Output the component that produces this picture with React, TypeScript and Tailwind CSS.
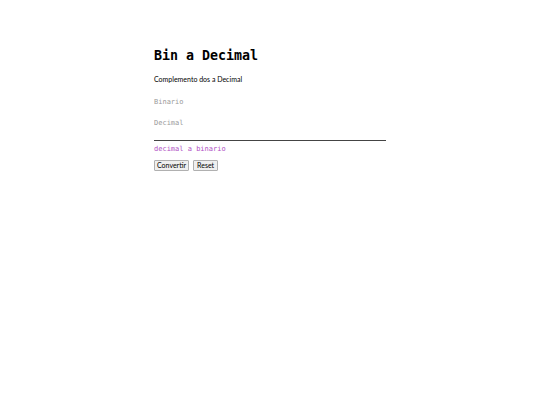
import React, { useState } from 'react';

export default function App() {
  const [bin, setBin] = useState('');
  const [dec, setDec] = useState('');

  return (
    <div className="min-h-[405px] w-full bg-white pt-[47px] pl-[154px]">
      <h1 className="font-['DejaVu_Sans_Mono',monospace] text-[13.3px] leading-[18px] font-bold text-black">Bin a Decimal</h1>
      <p className="mt-[9px] font-['Lato',sans-serif] text-[7px] leading-[10px] text-black">Complemento dos a Decimal</p>

      <div className="mt-[11px] flex w-[232px] flex-col">
        <input
          value={bin}
          onChange={(e) => setBin(e.target.value)}
          placeholder="Binario"
          className="h-[14px] w-full font-['DejaVu_Sans_Mono',monospace] text-[7px] text-black outline-none placeholder:text-[#9a9a9a]"
        />
        <input
          value={dec}
          onChange={(e) => setDec(e.target.value)}
          placeholder="Decimal"
          className="mt-[7px] h-[14px] w-full font-['DejaVu_Sans_Mono',monospace] text-[7px] text-black outline-none placeholder:text-[#9a9a9a]"
        />
        <div className="mt-[10px] h-px w-full bg-[#444]" />
      </div>

      <p className="mt-[3px] font-['DejaVu_Sans_Mono',monospace] text-[7px] leading-[10px] text-[#b04fc4]">decimal a binario</p>

      <div className="mt-[6px] flex gap-[4px]">
        <button className="h-[11px] rounded-[1px] border border-[#b0b0b0] bg-[#efefef] px-[2px] font-['Lato',sans-serif] text-[7px] leading-[9px] text-black">Convertir</button>
        <button
          className="h-[11px] rounded-[1px] border border-[#b0b0b0] bg-[#efefef] px-[3px] font-['Lato',sans-serif] text-[7px] leading-[9px] text-black"
          onClick={() => { setBin(''); setDec(''); }}
        >
          Reset
        </button>
      </div>
    </div>
  );
}
